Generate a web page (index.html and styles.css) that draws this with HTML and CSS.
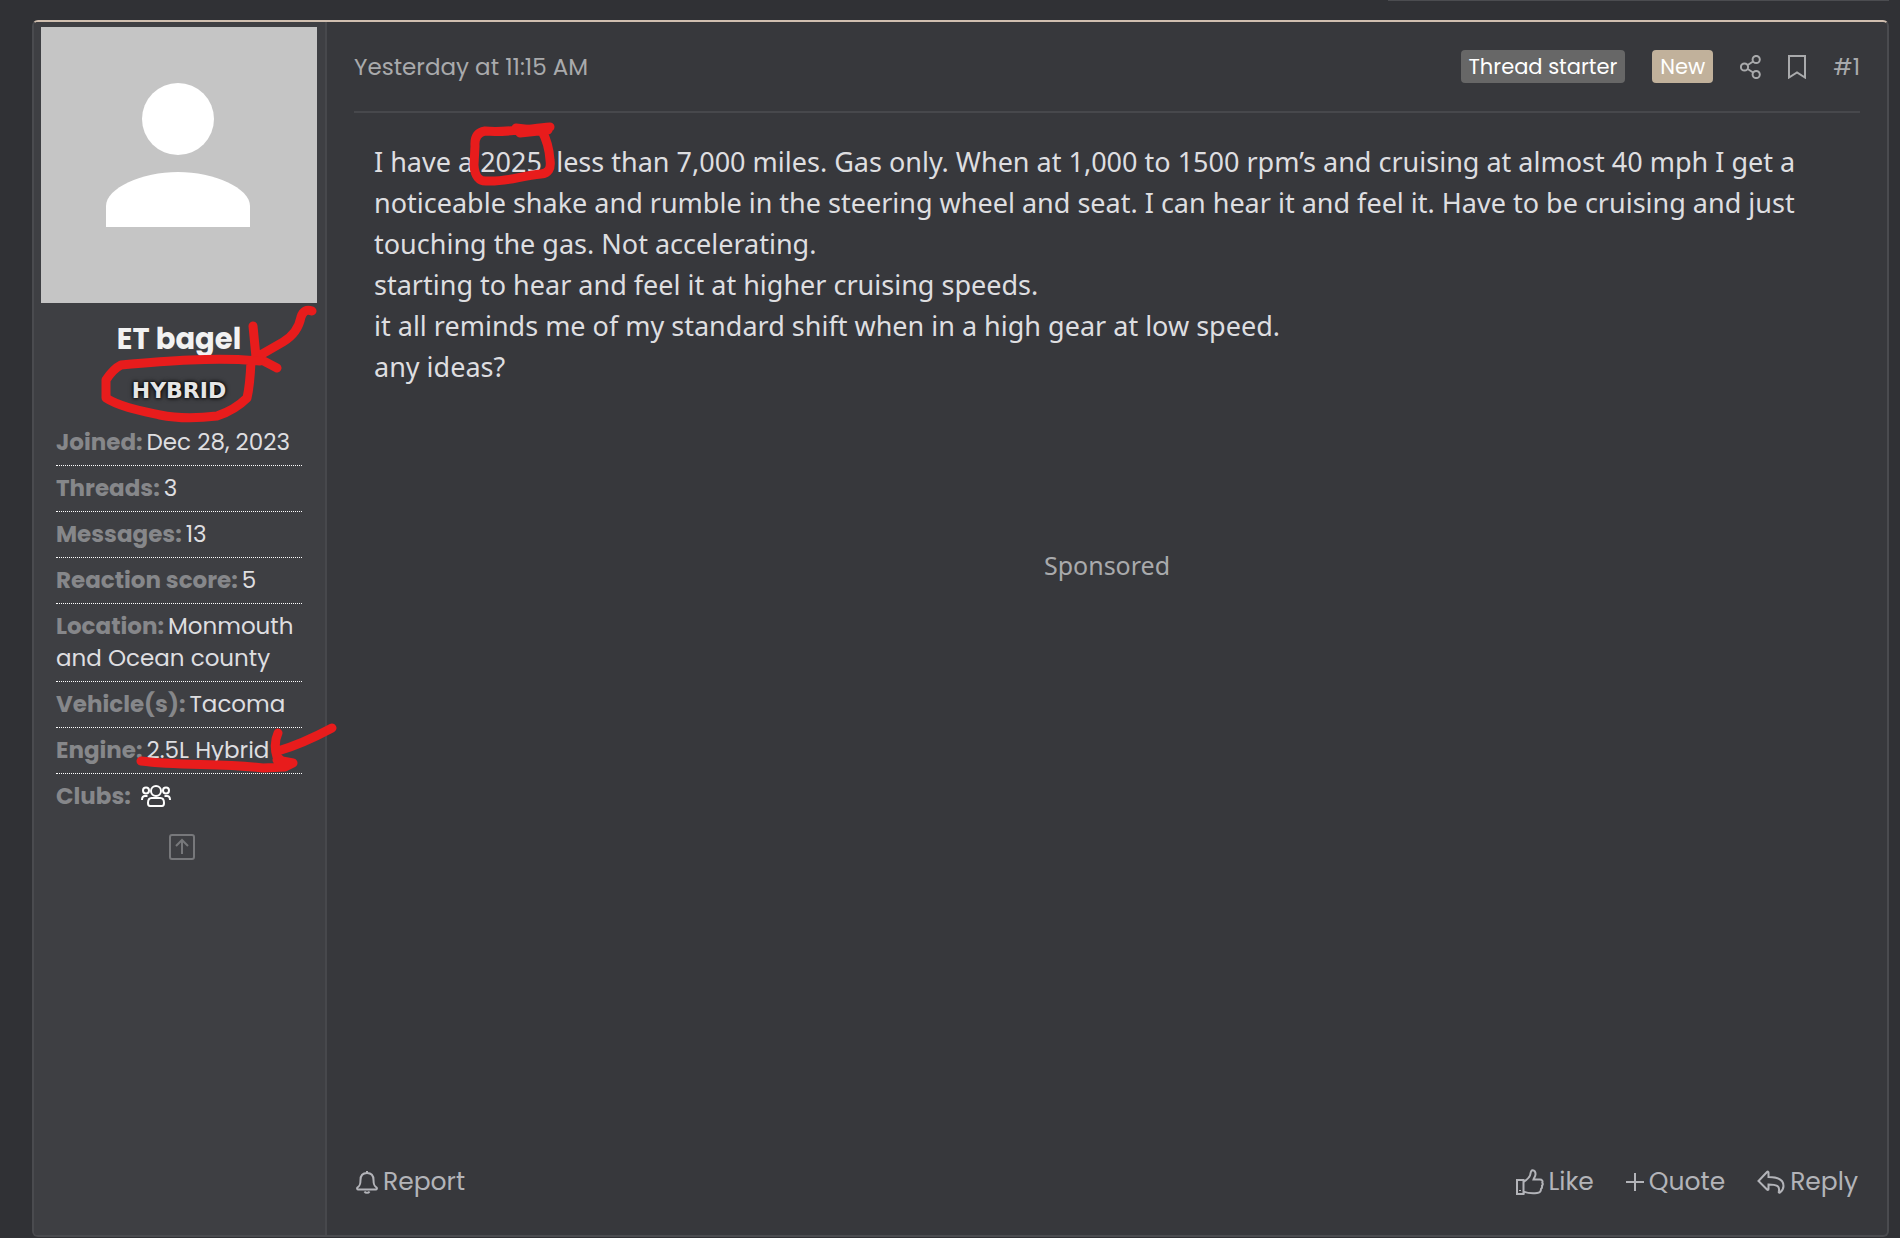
FILE: index.html
```html
<!DOCTYPE html>
<html lang="en">
<head>
<meta charset="utf-8">
<meta name="viewport" content="width=device-width, initial-scale=1">
<title>Forum thread</title>
<link rel="stylesheet" href="styles.css">
</head>
<body>
<div class="thread-tools"></div>
<article class="post">
  <aside class="user">
    <svg class="avatar" viewBox="0 0 276 276" role="img" aria-label="Default avatar"><rect width="276" height="276" fill="#c5c5c5"/><circle cx="137" cy="92" r="36" fill="#fff"/><path d="M65 200v-21c0-18 36-34 72-34s72 16 72 34v21z" fill="#fff"/></svg>
    <h2 class="user-name">ET bagel</h2>
    <div class="user-banner">HYBRID</div>
    <dl class="stats">
      <div class="stat"><dt>Joined:</dt><dd>Dec 28, 2023</dd></div>
      <div class="stat"><dt>Threads:</dt><dd>3</dd></div>
      <div class="stat"><dt>Messages:</dt><dd>13</dd></div>
      <div class="stat"><dt>Reaction score:</dt><dd>5</dd></div>
      <div class="stat"><dt>Location:</dt><dd>Monmouth and Ocean county</dd></div>
      <div class="stat"><dt>Vehicle(s):</dt><dd>Tacoma</dd></div>
      <div class="stat"><dt>Engine:</dt><dd>2.5L Hybrid</dd></div>
      <div class="stat stat-clubs"><dt>Clubs:</dt><dd><svg class="clubs-icon" viewBox="0 0 30 22" aria-label="Clubs"><circle cx="15" cy="6" r="5"/><circle cx="5" cy="5.500" r="3"/><circle cx="25" cy="5.500" r="3"/><path d="M10.500 13h9c2.500 0 3.500 2.500 3.500 5 0 2-.5 3-2 3H9c-1.500 0-2-1-2-3 0-2.500 1-5 3.500-5zM1 15c0-3 1-4 3-4h2.500M29 15c0-3-1-4-3-4h-2.500"/></svg></dd></div>
    </dl>
    <button class="to-top" type="button" aria-label="Back to top"><svg viewBox="0 0 26 26"><rect x="1" y="1" width="24" height="24" rx="2"/><path d="M13 20V7M7 12l6-6 6 6"/></svg></button>
  </aside>
  <section class="content">
    <header class="post-head">
      <time class="post-date">Yesterday at 11:15 AM</time>
      <span class="badge badge-starter">Thread starter</span>
      <span class="badge badge-new">New</span>
      <a class="head-link" href="#share" aria-label="Share"><svg class="share-icon" viewBox="0 0 21 24"><circle cx="4.500" cy="12" r="3.600"/><circle cx="16.200" cy="4.500" r="3.600"/><circle cx="16.200" cy="19.500" r="3.600"/><path d="M7.700 10l5.400-3.500M7.700 14l5.400 3.500"/></svg></a>
      <a class="head-link" href="#bookmark" aria-label="Bookmark"><svg class="mark-icon" viewBox="0 0 18 24"><path d="M1 1h16v21.500l-8-5-8 5z"/></svg></a>
      <a class="head-link post-number" href="#post-1">#1</a>
    </header>
    <div class="message">I have a 2025, less than 7,000 miles. Gas only. When at 1,000 to 1500 rpm’s and cruising at almost 40 mph I get a noticeable shake and rumble in the steering wheel and seat. I can hear it and feel it. Have to be cruising and just touching the gas. Not accelerating.<br>starting to hear and feel it at higher cruising speeds.<br>it all reminds me of my standard shift when in a high gear at low speed.<br>any ideas?</div>
    <div class="sponsored">Sponsored</div>
    <footer class="actions">
      <a class="action action-report" href="#report"><svg class="bell-icon" viewBox="0 0 22 24"><path d="M11 1v2M11 3c-4.500 0-6.500 3-6.500 7 0 5-1 6-3 7.500-.8.800-.3 2 .7 2h17.600c1 0 1.500-1.200.7-2-2-1.500-3-2.500-3-7.500 0-4-2-7-6.500-7zM8.500 21.500c1 1.800 4 1.800 5 0"/></svg>Report</a>
      <button class="action" type="button"><svg class="like-icon" viewBox="0 0 28 26"><path d="M1 11h6.500v14H1zM7.500 13c3-2 5.500-4 6.500-6.500.8-2 .3-5 2.500-5.300 2-.2 3.200 2 3 4.300-.2 2-1.500 3.500-2 5h6.500c2 0 3 1.500 2.300 3.200.7 1 .7 2-.3 3 .3 1.500 0 2.500-1 3.300 0 2.500-1.500 3.800-4 4-6 .5-9 .5-13.500-1.500M4 21v1"/></svg>Like</button>
      <button class="action" type="button"><svg class="plus-icon" viewBox="0 0 18 18"><path d="M9 0v18M0 9h18"/></svg>Quote</button>
      <button class="action" type="button"><svg class="reply-icon" viewBox="0 0 28 24"><path d="M1.500 11L10 2c.8-.8 1.500-.5 1.500.5v4.500c9 0 15 2.500 15 9 0 3-1.500 5-3.500 6.500-1 .5-1.500 0-1.200-1 1.500-5.500-2.500-7-10.300-7v4.500c0 1-.7 1.300-1.500.5z"/></svg>Reply</button>
    </footer>
  </section>
</article>
<svg class="markup" width="600" height="800" viewBox="0 0 600 800" aria-hidden="true">
  <path d="M550 127C527 129 505 133 485 131Q474 133 475 146L474 165Q475 182 487 181C507 182 520 176 541 174Q552 173 550 160Q549 144 542 131L516 128M548 130L520 133"/>
  <path d="M312 311Q304 308 301 317Q298 333 283 342L255 358M253 326L256 357L277 368"/>
  <path d="M260 361C215 357 165 361 121 365Q113 369 106 380L106 398C120 407 142 411 160 415C180 419 200 418 217 416Q235 410 247 398Q250 385 251 361"/>
  <path d="M141 761C180 766 220 763 263 768L285 767L293 763L277 760M332 728Q302 744 278 751M278 733Q273 744 277 757L286 764"/>
</svg>
</body>
</html>
```
FILE: styles.css
```css
* {
  box-sizing: border-box;
}

body {
  position: relative;
  display: flex;
  flex-direction: column;
  min-height: 100vh;
  margin: 0;
  padding: 0 11px 1px 32px;
  background: #303135;
  color: #dedee0;
  font-family: Poppins, Inter, sans-serif;
  font-size: 23px;
}

svg {
  display: block;
  fill: none;
  stroke: currentColor;
  stroke-width: 2px;
}

a {
  color: inherit;
  text-decoration: none;
}

.thread-tools {
  width: 27%;
  height: 1px;
  margin: 0 0 19px auto;
  background: #4b4c50;
}

.post {
  display: flex;
  flex: 1;
  border: 2px solid #4a4b4f;
  border-top-color: #d0bfb0;
  border-radius: 6px;
  background: #37383c;
}

.user {
  flex: none;
  width: 293px;
  padding: 5px 8px 0 7px;
  border-right: 2px solid #47484c;
  border-radius: 4px 0 0 4px;
  background: #3e3f43;
}

.avatar {
  width: 100%;
  height: auto;
  stroke: none;
}

.user-name {
  margin: 16px 0 0;
  color: #f2f2f2;
  font-size: 29px;
  font-weight: 700;
  line-height: 40px;
  text-align: center;
}

.user-banner {
  margin: 20px 0 17px;
  color: #e6e6e6;
  font-family: "DejaVu Sans", sans-serif;
  font-size: 22px;
  font-weight: 700;
  line-height: 24px;
  text-align: center;
  text-shadow: 0 0 3px #000, 0 0 5px #000;
}

.stats {
  margin: 0;
  padding: 0 15px;
}

.stat {
  padding: 6px 0 7px;
  border-bottom: 1px dotted #fff;
  line-height: 32px;
}

.stat-clubs {
  border-bottom: 0;
}

.stat dt,
.stat dd {
  display: inline;
  margin: 0;
}

.stat dt {
  margin-right: 4px;
  color: #86878a;
  font-weight: 700;
}

.clubs-icon {
  display: inline-block;
  width: 30px;
  height: 22px;
  margin-left: 6px;
  color: #fff;
  vertical-align: -3px;
}

.to-top {
  display: block;
  margin: 15px auto 0;
  padding: 0 0 0 6px;
  border: 0;
  background: none;
  color: #77787b;
}

.to-top svg {
  width: 26px;
  height: 26px;
}

.content {
  display: flex;
  flex: 1;
  flex-direction: column;
  min-width: 0;
  padding: 0 27px;
}

.post-head {
  display: flex;
  align-items: center;
  height: 91px;
  border-bottom: 2px solid #47484c;
  color: #a9aaac;
}

.post-date {
  margin-right: auto;
}

.badge {
  margin-right: 27px;
  padding: 0 8px;
  border-radius: 4px;
  color: #fff;
  font-size: 21px;
  line-height: 33px;
}

.badge-starter {
  background: #676767;
}

.badge-new {
  background: #c1b19b;
}

.head-link + .head-link {
  margin-left: 27px;
}

.share-icon {
  width: 21px;
  height: 24px;
}

.mark-icon {
  width: 18px;
  height: 24px;
}

.message {
  padding: 28px 20px 0;
  font-family: "Noto Sans", sans-serif;
  font-size: 27px;
  line-height: 41px;
}

.sponsored {
  margin-top: 160px;
  color: #a9aaac;
  font-family: "Noto Sans", sans-serif;
  font-size: 25px;
  line-height: 36px;
  text-align: center;
}

.actions {
  display: flex;
  align-items: center;
  gap: 32px;
  margin-top: auto;
  padding: 0 2px 35px;
  color: #b3b4b9;
}

.action {
  display: flex;
  align-items: center;
  gap: 5px;
  padding: 0;
  border: 0;
  background: none;
  color: inherit;
  font: inherit;
  font-size: 25px;
  line-height: 36px;
}

.action-report {
  margin-right: auto;
}

.bell-icon {
  width: 22px;
  height: 24px;
}

.like-icon {
  width: 28px;
  height: 26px;
}

.plus-icon {
  width: 18px;
  height: 18px;
}

.reply-icon {
  width: 28px;
  height: 24px;
}

.markup {
  position: absolute;
  top: 0;
  left: 0;
  color: #e81c1c;
  stroke-width: 9px;
  stroke-linecap: round;
  stroke-linejoin: round;
  pointer-events: none;
}
```
